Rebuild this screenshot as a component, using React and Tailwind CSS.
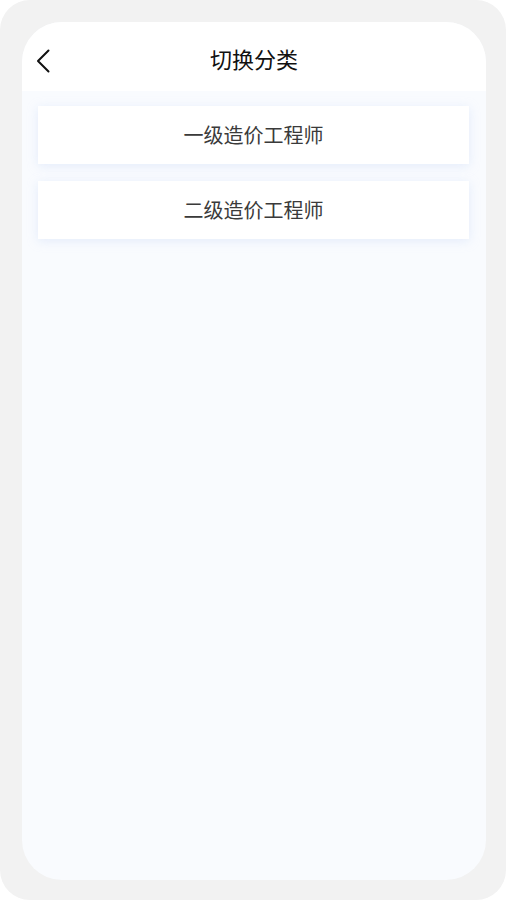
export default function App() {
  const items = ["一级造价工程师", "二级造价工程师"];

  return (
    <div
      className="w-[506px] h-[900px] bg-white"
      style={{ fontFamily: '"Noto Sans CJK SC", "Noto Sans", sans-serif' }}
    >
      <div className="w-full h-full rounded-[30px] bg-[#f2f2f2] pt-[22px] pl-[22px] pr-[20px] pb-[20px]">
        <div className="w-full h-full rounded-[40px] overflow-hidden bg-[#f9fbfe] flex flex-col">
          {/* Header */}
          <div className="relative h-[69px] bg-white flex items-center justify-center shrink-0">
            <button className="absolute left-[14px] top-[27px] w-[14px] h-[24px] flex items-center justify-center">
              <svg width="14" height="24" viewBox="0 0 14 24" fill="none">
                <path d="M12.5 1.5 L2 12 L12.5 22.5" stroke="#111" strokeWidth="2" strokeLinecap="round" strokeLinejoin="round" />
              </svg>
            </button>
            <h1 className="text-[22px] text-[#111] leading-none pt-[2px]">切换分类</h1>
          </div>

          {/* List */}
          <div className="flex flex-col gap-[17px] pt-[15px] pl-[16px] pr-[17px]">
            {items.map((t) => (
              <div
                key={t}
                className="h-[58px] bg-white flex items-center justify-center text-[20px] text-[#3a3a3a] shadow-[0_2px_10px_rgba(190,210,245,0.35)]"
              >
                {t}
              </div>
            ))}
          </div>
        </div>
      </div>
    </div>
  );
}
